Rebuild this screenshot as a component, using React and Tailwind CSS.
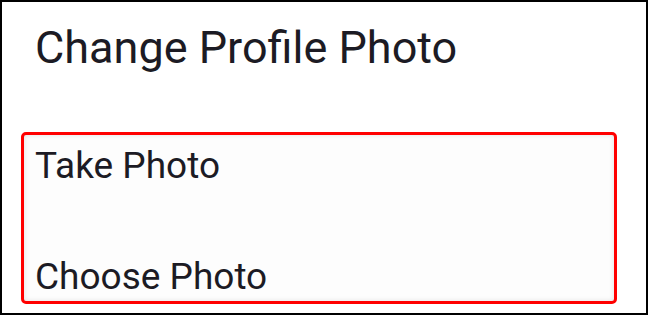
export default function App() {
  return (
    <div className="w-[650px] h-[316px] bg-white">
      <div
        className="w-[648px] h-[315px] border-2 border-black bg-white text-[#1c1b24] flex flex-col"
        style={{ fontFamily: 'Roboto, "Liberation Sans", sans-serif' }}
      >
        <h1 className="ml-[33px] mt-[19px] text-[45px] leading-[54px] font-normal">
          Change Profile Photo
        </h1>

        <div className="ml-[19px] mt-[57px] w-[596px] h-[172px] rounded-[5px] border-[3px] border-[#ff0000] bg-[#fdfdfd] shadow-[inset_0_0_5px_rgba(0,0,0,0.12)] flex flex-col pl-[11px]">
          <p className="mt-[11px] text-[37px] leading-[40px]">Take Photo</p>
          <p className="mt-[71px] text-[37px] leading-[40px]">Choose Photo</p>
        </div>
      </div>
    </div>
  );
}
